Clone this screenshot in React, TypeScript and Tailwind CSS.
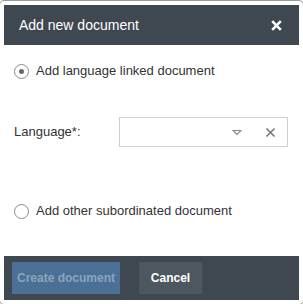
import React, { useState } from 'react'

const font = { fontFamily: '"Liberation Sans", Arial, sans-serif' }

function Radio({ checked, label, onClick }: { checked: boolean; label: string; onClick: () => void }) {
  return (
    <label onClick={onClick} className="flex items-center h-[20px] cursor-pointer">
      <span className="ml-[10px] w-[15px] h-[15px] rounded-full border border-[#8a8a8a] flex items-center justify-center shrink-0">
        {checked && <span className="w-[5px] h-[5px] rounded-full bg-[#666]" />}
      </span>
      <span className="ml-[7px] text-[13px] text-[#333]">{label}</span>
    </label>
  )
}

export default function App() {
  const [mode, setMode] = useState<'linked' | 'other'>('linked')

  return (
    <div className="w-[303px] h-[304px] overflow-hidden bg-white" style={font}>
      <div className="-ml-px w-[305px] h-[305px] border border-[#9a9a9a] rounded-[5px] p-[4px] bg-white">
        <div className="flex flex-col h-[295px]">
          {/* Header */}
          <div className="h-[40px] bg-[#3f4750] flex items-center justify-between pl-[15px] pr-[17px]">
            <span className="text-white text-[14px]">Add new document</span>
            <svg width="11" height="11" viewBox="0 0 11 11">
              <path d="M1.2 1.2 L9.8 9.8 M9.8 1.2 L1.2 9.8" stroke="#fff" strokeWidth="2.6" />
            </svg>
          </div>

          {/* Body */}
          <div className="flex-1 flex flex-col pt-[16px]">
            <Radio checked={mode === 'linked'} label="Add language linked document" onClick={() => setMode('linked')} />

            <div className="flex items-center mt-[36px]">
              <span className="w-[115px] pl-[10px] text-[13px] text-[#333]">Language*:</span>
              <div className="w-[169px] h-[30px] border border-[#cfcfcf] flex items-center justify-end pr-[11px]">
                <svg width="10" height="7" viewBox="0 0 10 7" className="mr-[23px]">
                  <path d="M1 1.5 H9 L5 5.5 Z" fill="none" stroke="#8a8a8a" strokeWidth="1.2" />
                </svg>
                <svg width="11" height="11" viewBox="0 0 11 11">
                  <path d="M1.5 1.5 L9.5 9.5 M9.5 1.5 L1.5 9.5" stroke="#7a7a7a" strokeWidth="1.7" />
                </svg>
              </div>
            </div>

            <div className="mt-[54px]">
              <Radio checked={mode === 'other'} label="Add other subordinated document" onClick={() => setMode('other')} />
            </div>
          </div>

          {/* Footer */}
          <div className="h-[44px] bg-[#3f4750] flex items-center pl-[8px] gap-[19px]">
            <button disabled className="w-[108px] h-[32px] bg-[#4a7195] text-[#8ba4bd] text-[12px] font-bold">
              Create document
            </button>
            <button className="w-[63px] h-[32px] bg-[#4d5760] text-white text-[12px] font-bold">
              Cancel
            </button>
          </div>
        </div>
      </div>
    </div>
  )
}
